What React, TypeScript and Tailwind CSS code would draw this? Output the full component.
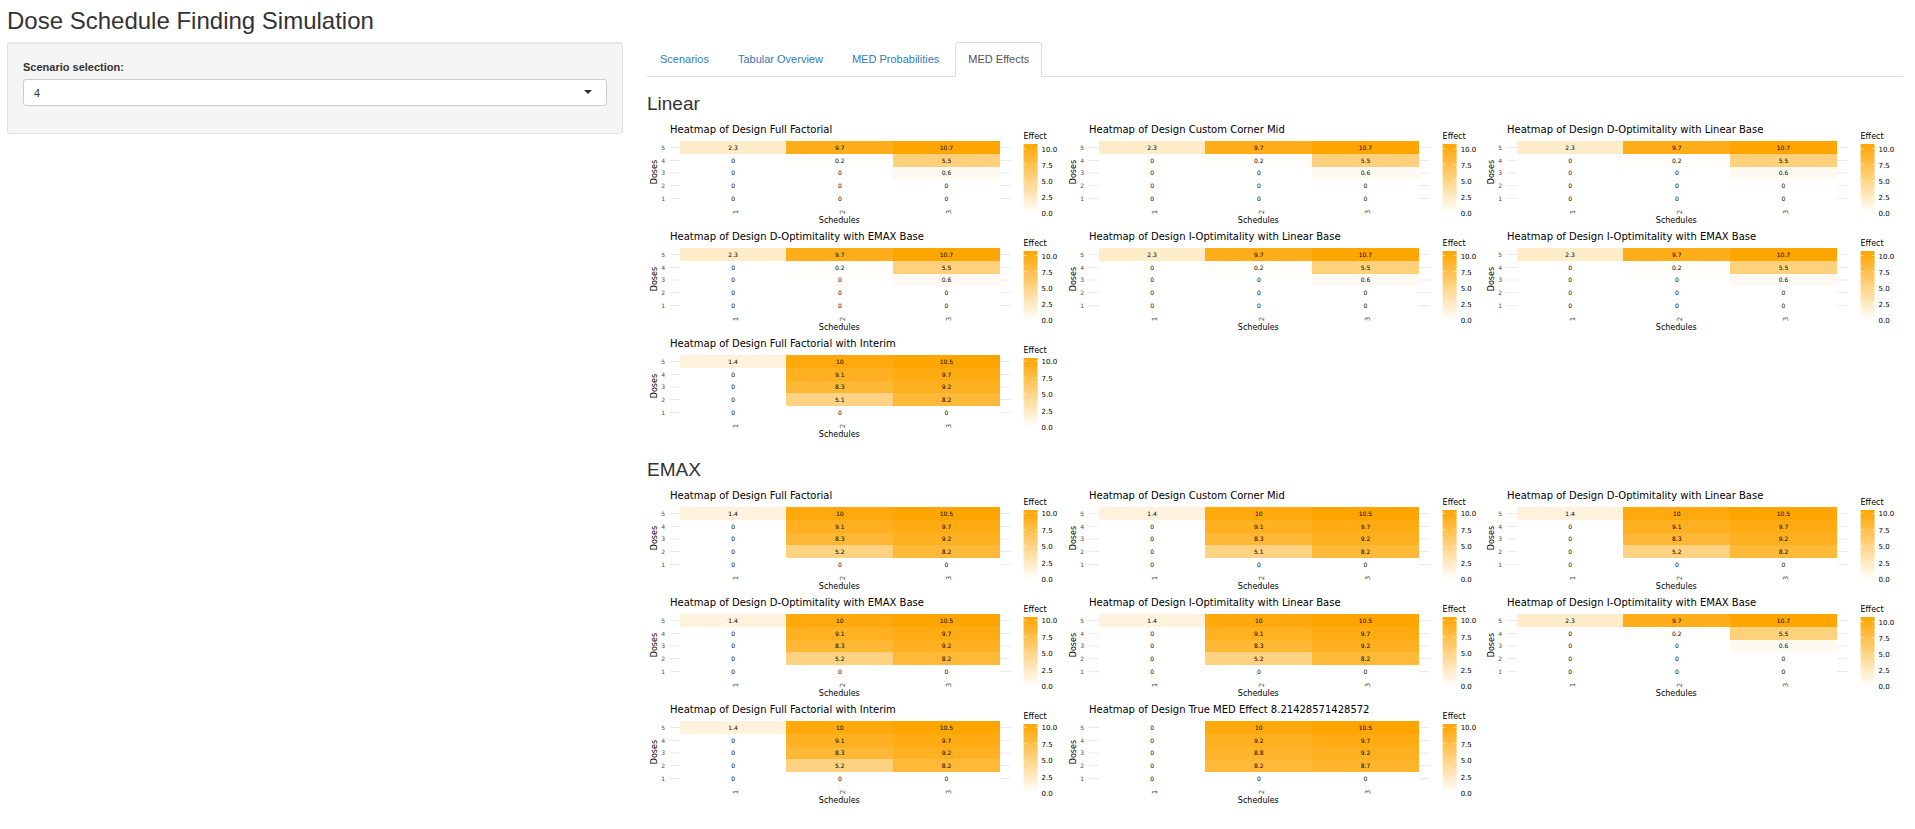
const LINEAR_A = [[2.3, 9.7, 10.7], [0, 0.2, 5.5], [0, 0, 0.6], [0, 0, 0], [0, 0, 0]];
const emax = (low: number) => [[1.4, 10, 10.5], [0, 9.1, 9.7], [0, 8.3, 9.2], [0, low, 8.2], [0, 0, 0]];
const TRUE_EFFECT = [[0, 10, 10.5], [0, 9.2, 9.7], [0, 8.8, 9.2], [0, 8.2, 8.7], [0, 0, 0]];

type Plot = { design: string; max: number; rows: number[][] };

const sections: { name: string; plots: Plot[] }[] = [
  {
    name: "Linear",
    plots: [
      { design: "Full Factorial", max: 10.7, rows: LINEAR_A },
      { design: "Custom Corner Mid", max: 10.7, rows: LINEAR_A },
      { design: "D-Optimitality with Linear Base", max: 10.7, rows: LINEAR_A },
      { design: "D-Optimitality with EMAX Base", max: 10.7, rows: LINEAR_A },
      { design: "I-Optimitality with Linear Base", max: 10.7, rows: LINEAR_A },
      { design: "I-Optimitality with EMAX Base", max: 10.7, rows: LINEAR_A },
      { design: "Full Factorial with Interim", max: 10.5, rows: emax(5.1) },
    ],
  },
  {
    name: "EMAX",
    plots: [
      { design: "Full Factorial", max: 10.5, rows: emax(5.2) },
      { design: "Custom Corner Mid", max: 10.5, rows: emax(5.1) },
      { design: "D-Optimitality with Linear Base", max: 10.5, rows: emax(5.2) },
      { design: "D-Optimitality with EMAX Base", max: 10.5, rows: emax(5.2) },
      { design: "I-Optimitality with Linear Base", max: 10.5, rows: emax(5.2) },
      { design: "I-Optimitality with EMAX Base", max: 10.7, rows: LINEAR_A },
      { design: "Full Factorial with Interim", max: 10.5, rows: emax(5.2) },
      { design: "True MED Effect 8.21428571428572", max: 10.5, rows: TRUE_EFFECT },
    ],
  },
];

const COL_EDGES = [33, 139, 246, 352];
const ROW_EDGES = [20, 33, 46, 58, 71, 84];
const LEGEND = [10, 7.5, 5, 2.5, 0];

function shade(value: number, max: number) {
  const t = value / max;
  return `rgb(255, ${Math.round(255 - 90 * t)}, ${Math.round(255 - 255 * t)})`;
}

function Heatmap({ design, max, rows }: Plot) {
  const title = `Heatmap of Design ${design}`;
  return (
    <svg viewBox="0 0 418 107" className="block w-full font-['DejaVu_Sans',sans-serif]" role="img" aria-label={title}>
      <text x="23" y="12" className="fill-black text-[10px]">{title}</text>

      {rows.map((_, r) => {
        const y = (ROW_EDGES[r] + ROW_EDGES[r + 1]) / 2;
        return (
          <g key={r}>
            <path d={`M23 ${y}H363`} stroke="#ebebeb" />
            <text x="18" y={y + 2} textAnchor="end" className="fill-[#4d4d4d] text-[6px]">{5 - r}</text>
          </g>
        );
      })}
      {[0, 1, 2].map((c) => {
        const x = (COL_EDGES[c] + COL_EDGES[c + 1]) / 2;
        return (
          <g key={c}>
            <path d={`M${x} 19V85`} stroke="#ebebeb" />
            <text transform={`translate(${x + 5} 93) rotate(-90)`} className="fill-[#4d4d4d] text-[7px]">{c + 1}</text>
          </g>
        );
      })}

      {rows.map((row, r) =>
        row.map((value, c) => {
          const x = COL_EDGES[c];
          const y = ROW_EDGES[r];
          const w = COL_EDGES[c + 1] - x;
          const h = ROW_EDGES[r + 1] - y;
          return (
            <g key={`${r}-${c}`}>
              <rect x={x} y={y} width={w} height={h} fill={shade(value, max)} shapeRendering="crispEdges" />
              <text x={x + w / 2} y={y + h / 2 + 2} textAnchor="middle" className="fill-black text-[6px]">{value}</text>
            </g>
          );
        })
      )}

      <text x="192" y="102" textAnchor="middle" className="fill-black text-[8px]">Schedules</text>
      <text transform="translate(10 51) rotate(-90)" textAnchor="middle" className="fill-black text-[8px]">Doses</text>

      <text x="376" y="18" className="fill-black text-[8px]">Effect</text>
      <rect x="376" y="23" width="14" height="69" fill="url(#effect-scale)" />
      {LEGEND.map((tick) => {
        const y = 92 - (tick / max) * 69;
        return (
          <g key={tick}>
            <path d={`M376 ${y}h3M387 ${y}h3`} stroke="#fff" strokeWidth="0.5" />
            <text x="394" y={y + 3} className="fill-black text-[7px]">{tick.toFixed(1)}</text>
          </g>
        );
      })}
    </svg>
  );
}

const TABS = ["Scenarios", "Tabular Overview", "MED Probabilities", "MED Effects"];

export default function App() {
  return (
    <div className="px-[7px] pb-5 font-['Liberation_Sans',Arial,sans-serif] text-[11px] leading-4 text-[#333]">
      <svg width="0" height="0" className="absolute" aria-hidden="true">
        <defs>
          <linearGradient id="effect-scale" x1="0" y1="0" x2="0" y2="1">
            <stop offset="0" stopColor="#ffa500" />
            <stop offset="1" stopColor="#fff" />
          </linearGradient>
        </defs>
      </svg>
      <h2 className="pt-2 pb-2 text-2xl leading-[26px]">Dose Schedule Finding Simulation</h2>
      <div className="grid grid-cols-[616fr_1256fr] items-start gap-6 pr-[5px]">
        <form className="rounded-[3px] border border-[#e3e3e3] bg-[#f5f5f5] px-[15px] pt-4 pb-[27px] shadow-[inset_0_1px_1px_rgba(0,0,0,0.05)]">
          <label htmlFor="scenario" className="block pb-1 font-bold">Scenario selection:</label>
          <div className="relative">
            <select id="scenario" defaultValue="4" className="block h-[27px] w-full appearance-none rounded-[3px] border border-[#ccc] bg-white px-[10px]">
              <option>1</option>
              <option>2</option>
              <option>3</option>
              <option>4</option>
            </select>
            <svg viewBox="0 0 8 4" className="pointer-events-none absolute top-[11px] right-[15px] h-1 w-2" aria-hidden="true">
              <path d="M0 0h8L4 4z" fill="#333" />
            </svg>
          </div>
        </form>

        <main>
          <nav className="flex gap-[3px] border-b border-[#ddd]">
            {TABS.map((tab) => (
              <a
                key={tab}
                href="#"
                aria-current={tab === "MED Effects" ? "page" : undefined}
                className="-mb-px rounded-t-[3px] border border-transparent px-3 pt-2 pb-[9px] leading-4 text-[#337ab7] aria-[current=page]:border-[#ddd] aria-[current=page]:border-b-white aria-[current=page]:bg-white aria-[current=page]:text-[#555]"
              >
                {tab}
              </a>
            ))}
          </nav>
          {sections.map((section) => (
            <section key={section.name}>
              <h3 className="pt-4 pb-[7px] text-[19px] leading-[21px]">{section.name}</h3>
              <div className="grid grid-cols-3">
                {section.plots.map((plot) => (
                  <Heatmap key={plot.design} {...plot} />
                ))}
              </div>
            </section>
          ))}
        </main>
      </div>
    </div>
  );
}
